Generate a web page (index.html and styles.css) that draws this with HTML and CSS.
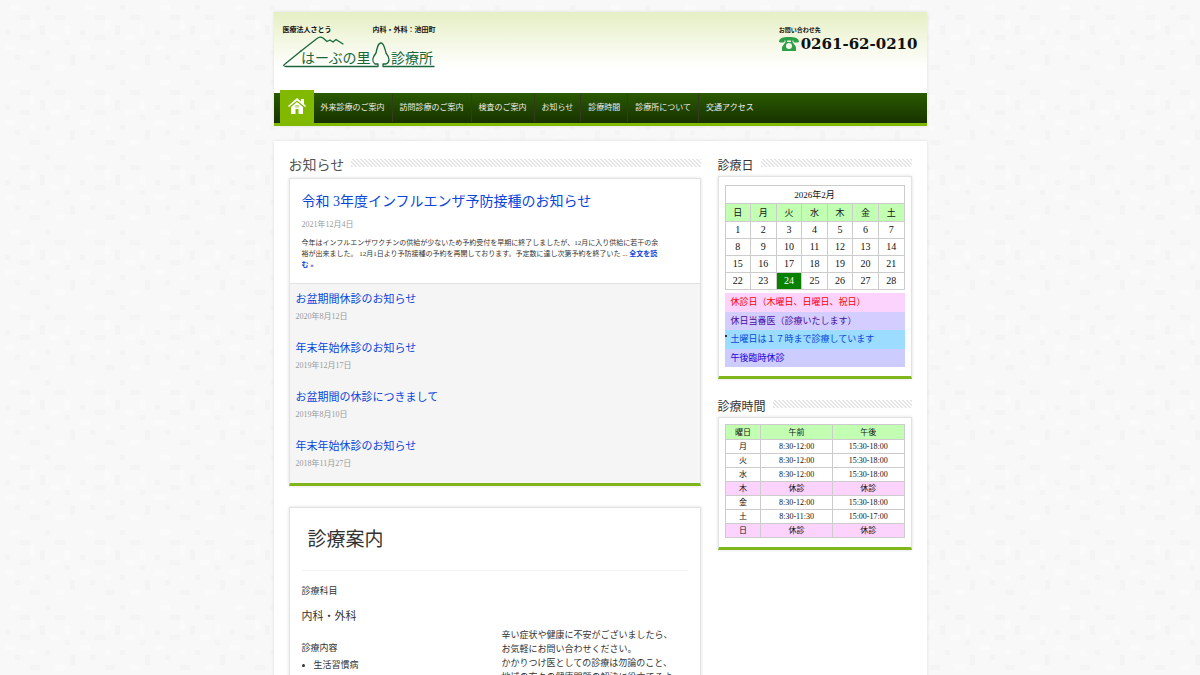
FILE: index.html
```html
<!DOCTYPE html>
<html lang="ja">

<head>
    <meta charset="UTF-8">
    <meta name="viewport" content="width=device-width, initial-scale=1.0">
    <title>はーぶの里診療所</title>
    <link rel="stylesheet" href="styles.css">
</head>

<body>
    <div class="wrapper">
        <header class="header">
            <div class="branding">
                <a href="#" class="logo">
                    <span class="tagline"><span>医療法人さとう</span><span>内科・外科：池田町</span></span>
                    <svg class="logo-mark" width="153" height="34" viewBox="0 0 153 34" role="img" aria-label="はーぶの里診療所">
                        <g fill="none" stroke="#17673a" stroke-width="1.3" stroke-linejoin="round" stroke-linecap="round">
                            <path d="M18 16 L2 29 Q-1 31 3 31.500 H95 V29 H92 C88 26 90 22 93 18 C94 13 95 8 98 8 C101 8 102 14 103 18 C107 23 107 27 103 29 H100 V31.500 H151" />
                            <path d="M18 16 L34 3.500 Q37 1 40 3 L44 6.500 L47 5 L50 7 L53 4.500 L60 9" />
                        </g>
                        <g class="logo-text" fill="#17673a">
                            <text x="18" y="28">はーぶの里</text>
                            <text x="108" y="28">診療所</text>
                        </g>
                    </svg>
                </a>
                <div class="contact">
                    <span class="contact-label">お問い合わせ先</span>
                    <div class="phone">
                        <svg width="20" height="14" viewBox="0 0 20 14" aria-hidden="true">
                            <path fill="#2e9e48" fill-rule="evenodd" d="M0 5 C0 1 4 0 10 0 C16 0 20 1 20 5 Q17 6 14.500 5 V3.500 H13.500 V5 L17 10 V14 H3 V10 L6.500 5 V3.500 H5.500 V5 Q3 6 0 5 Z M8 3.500 V5 H12 V3.500 Z M10 6 A3 3 0 1 0 10 12 A3 3 0 1 0 10 6 Z" />
                        </svg>
                        <span>0261-62-0210</span>
                    </div>
                </div>
            </div>
            <nav class="nav">
                <a href="#" class="home" aria-label="ホーム">
                    <svg width="18" height="17" viewBox="0 0 18 17" aria-hidden="true">
                        <path fill="#fff" fill-rule="evenodd" d="M9 0 L13 3.500 V1 H16 V6 L18 8 L17 9 L9 2.500 L1 9 L0 8 Z M9 4 L15 9 V16 H10.500 V11 H7.500 V16 H3 V9 Z M7.500 7 V9.500 H10.500 V7 Z" />
                        <path stroke="#fff" stroke-width=".6" d="M9 7 V9.500 M7.500 8.200 H10.500" />
                    </svg>
                </a>
                <a href="#">外来診療のご案内</a>
                <a href="#">訪問診療のご案内</a>
                <a href="#">検査のご案内</a>
                <a href="#">お知らせ</a>
                <a href="#">診療時間</a>
                <a href="#">診療所について</a>
                <a href="#">交通アクセス</a>
            </nav>
        </header>

        <div class="container">
            <main class="main">
                <section>
                    <h2 class="heading">お知らせ</h2>
                    <div class="box">
                        <article class="featured">
                            <h3><a href="#">令和 3年度インフルエンザ予防接種のお知らせ</a></h3>
                            <p class="date">2021年12月4日</p>
                            <p class="excerpt">今年はインフルエンザワクチンの供給が少ないため予約受付を早期に終了しましたが、12月に入り供給に若干の余<br>裕が出来ました。 12月1日より予防接種の予約を再開しております。予定数に達し次第予約を終了いた ... <a href="#">全文を読<br>む »</a></p>
                        </article>
                        <ul class="news">
                            <li><a href="#">お盆期間休診のお知らせ</a><p class="date">2020年8月12日</p></li>
                            <li><a href="#">年末年始休診のお知らせ</a><p class="date">2019年12月17日</p></li>
                            <li><a href="#">お盆期間の休診につきまして</a><p class="date">2019年8月10日</p></li>
                            <li><a href="#">年末年始休診のお知らせ</a><p class="date">2018年11月27日</p></li>
                        </ul>
                    </div>
                </section>

                <article class="box guide">
                    <h1>診療案内</h1>
                    <h4>診療科目</h4>
                    <p class="subject">内科・外科</p>
                    <div class="columns">
                        <div>
                            <h4 class="detail">診療内容</h4>
                            <ul class="bullets">
                                <li>生活習慣病</li>
                            </ul>
                        </div>
                        <p class="message">辛い症状や健康に不安がございましたら、<br>お気軽にお問い合わせください。<br>かかりつけ医としての診療は勿論のこと、<br>地域の方々の健康問題の解決に役立てるよ</p>
                    </div>
                </article>
            </main>

            <aside class="side">
                <section>
                    <h2 class="heading">診療日</h2>
                    <div class="box panel">
                        <table class="calendar">
                            <thead>
                                <tr><td colspan="7">2026年2月</td></tr>
                                <tr><th>日</th><th>月</th><th>火</th><th>水</th><th>木</th><th>金</th><th>土</th></tr>
                            </thead>
                            <tbody>
                                <tr><td>1</td><td>2</td><td>3</td><td>4</td><td>5</td><td>6</td><td>7</td></tr>
                                <tr><td>8</td><td>9</td><td>10</td><td>11</td><td>12</td><td>13</td><td>14</td></tr>
                                <tr><td>15</td><td>16</td><td>17</td><td>18</td><td>19</td><td>20</td><td>21</td></tr>
                                <tr><td>22</td><td>23</td><td class="today">24</td><td>25</td><td>26</td><td>27</td><td>28</td></tr>
                            </tbody>
                        </table>
                        <ul class="legend">
                            <li class="closed">休診日（木曜日、日曜日、祝日）</li>
                            <li class="duty">休日当番医（診療いたします）</li>
                            <li class="saturday">土曜日は１７時まで診療しています</li>
                            <li class="afternoon">午後臨時休診</li>
                        </ul>
                    </div>
                </section>
                <section>
                    <h2 class="heading">診療時間</h2>
                    <div class="box panel panel-hours">
                        <table class="hours">
                            <thead>
                                <tr><th class="day">曜日</th><th>午前</th><th>午後</th></tr>
                            </thead>
                            <tbody>
                                <tr><td>月</td><td>8:30-12:00</td><td>15:30-18:00</td></tr>
                                <tr><td>火</td><td>8:30-12:00</td><td>15:30-18:00</td></tr>
                                <tr><td>水</td><td>8:30-12:00</td><td>15:30-18:00</td></tr>
                                <tr class="off"><td>木</td><td>休診</td><td>休診</td></tr>
                                <tr><td>金</td><td>8:30-12:00</td><td>15:30-18:00</td></tr>
                                <tr><td>土</td><td>8:30-11:30</td><td>15:00-17:00</td></tr>
                                <tr class="off"><td>日</td><td>休診</td><td>休診</td></tr>
                            </tbody>
                        </table>
                    </div>
                </section>
            </aside>
        </div>
    </div>
</body>

</html>
```
FILE: styles.css
```css
* {
    box-sizing: border-box;
}

body {
    margin: 0;
    padding: 12px 16px;
    color: #333;
    font-family: "Liberation Serif", "Noto Sans CJK JP", serif;
    font-size: 9px;
    line-height: 14px;
    background: #f8f8f8 url("data:image/svg+xml,%3Csvg xmlns='http://www.w3.org/2000/svg' width='75' height='75'%3E%3Cpath fill='%23f4f4f4' d='M45 5h5v5h-5zM20 15h10v5H20zM55 15h10v5H55zM40 25h5v10h-5zM5 30h5v5H5zM20 35h10v5H20zM65 40h5v5h-5zM45 50h5v5h-5zM15 55h5v5h-5zM70 55h5v10h-5zM30 65h10v5H30z'/%3E%3Cpath fill='%23fafafa' d='M10 5h10v5H10zM30 20h5v10h-5zM65 25h5v10h-5zM50 35h10v5H50zM5 45h10v5H5zM30 50h5v5h-5zM55 65h10v5H55z'/%3E%3C/svg%3E");
}

h1, h2, h3, h4, p, ul {
    margin: 0;
    padding: 0;
    font-weight: normal;
}

ul {
    list-style: none;
}

a {
    color: #0a46dc;
    text-decoration: none;
}

.wrapper {
    max-width: 653px;
    margin: 0 auto;
}

/* header */
.header {
    background: #fff linear-gradient(#e6efc4, #fff 56px);
    box-shadow: 0 0 3px #ddd;
}

.branding {
    display: flex;
    justify-content: space-between;
    min-height: 81px;
    padding: 11px 9px 0;
}

.logo, .contact {
    color: #111;
    font-family: "Noto Sans CJK JP", sans-serif;
    font-size: 7px;
    font-weight: bold;
    line-height: 12px;
}

.tagline {
    display: flex;
    justify-content: space-between;
}

.logo-mark {
    display: block;
}

.logo-text {
    font-size: 14px;
    font-weight: normal;
}

.contact-label {
    font-size: 6px;
}

.phone {
    display: flex;
    align-items: center;
    gap: 2px;
    font-family: "DejaVu Serif", serif;
    font-size: 15px;
    line-height: 16px;
}

.nav {
    display: flex;
    align-items: center;
    height: 33px;
    padding-left: 6px;
    border-bottom: 3px solid #80b900;
    background: linear-gradient(#2a5a00, #173200);
}

.nav a {
    padding: 0 7px;
    border-right: 1px solid #333a20;
    color: #eee;
    font-size: 8px;
    line-height: 28px;
}

.nav a:last-child {
    border-right: none;
}

.nav .home {
    display: flex;
    align-items: center;
    align-self: flex-end;
    justify-content: center;
    width: 34px;
    height: 33px;
    padding: 0;
    border: none;
    background: #80b900;
}

/* content */
.container {
    display: grid;
    grid-template-columns: minmax(0, 1fr) 194px;
    gap: 17px;
    margin-top: 15px;
    padding: 15px;
    background: #fff;
    box-shadow: 0 0 3px #ddd;
}

.heading {
    display: flex;
    align-items: center;
    gap: 7px;
    font-size: 14px;
    line-height: 20px;
    color: #555;
}

.heading::after {
    content: "";
    flex: 1;
    height: 8px;
    margin-bottom: 6px;
    background: linear-gradient(45deg, #e4e4e4 25%, #fff 25%, #fff 50%, #e4e4e4 50%, #e4e4e4 75%, #fff 75%) 0 0 / 4px 4px;
}

.box {
    border: 1px solid #e2e2e2;
    border-bottom: 3px solid #80b51c;
    background: #fff;
    box-shadow: 0 0 3px #ddd;
}

.main .heading {
    margin-bottom: 2px;
}

.featured {
    padding: 12px;
    border-bottom: 1px solid #e2e2e2;
}

.featured h3 {
    font-size: 14px;
    line-height: 22px;
}

.date {
    color: #999;
    font-size: 8px;
    line-height: 18px;
}

.featured .date {
    margin: 3px 0 4px;
}

.excerpt {
    font-size: 7px;
    line-height: 11px;
}

.excerpt a {
    font-weight: bold;
}

.news {
    display: flex;
    flex-direction: column;
    gap: 13px;
    padding: 6px 6px 10px;
    background: #f5f5f5;
    font-size: 11px;
    line-height: 18px;
}

.guide {
    margin-top: 21px;
    padding: 12px;
}

.guide h1 {
    margin-bottom: 13px;
    padding: 6px 6px 16px;
    border-bottom: 1px solid #f2f2f2;
    font-size: 19px;
    line-height: 28px;
}

.guide h4 {
    font-size: 9px;
    line-height: 14px;
}

.subject {
    margin: 9px 0 3px;
    font-size: 11px;
    line-height: 18px;
}

.columns {
    display: grid;
    grid-template-columns: 200px 1fr;
}

.detail {
    padding-top: 13px;
}

.bullets {
    margin-top: 3px;
    padding-left: 12px;
    list-style: disc;
}

/* sidebar */
.side {
    display: flex;
    flex-direction: column;
    gap: 18px;
}

.side .heading {
    color: #333;
    font-size: 12px;
}

.panel {
    padding: 8px 6px 9px;
}

.panel-hours {
    padding-top: 6px;
}

table {
    width: 100%;
    border-collapse: collapse;
    table-layout: fixed;
    color: #111;
    text-align: center;
}

th, td {
    padding: 0;
    border: 1px solid #ccc;
    font-weight: normal;
}

th {
    background: #c3ffb3;
}

.calendar {
    font-size: 10px;
    line-height: 16px;
}

.calendar th, .calendar thead td {
    font-size: 9px;
}

.today {
    background: #088000;
    color: #fff;
}

.legend {
    display: grid;
    height: 74px;
    margin-top: 3px;
    line-height: 18px;
}

.legend li {
    padding-left: 6px;
}

.closed {
    background: #fbd3fd;
    color: #f00;
}

.duty {
    background: #d3ceff;
    color: #4b0aa0;
}

.saturday {
    position: relative;
    background: #9bdcff;
    color: #0a46dc;
}

/* marker hangs on the left edge of the row */
.saturday::before {
    content: "";
    position: absolute;
    top: 5px;
    left: 0;
    width: 2px;
    height: 2px;
    background: #333;
}

.afternoon {
    background: #ccf;
    color: #1a00d8;
}

.calendar tr {
    height: 17px;
}

.calendar thead tr {
    height: 18px;
}

.hours {
    font-size: 8px;
    line-height: 13px;
}

.hours thead tr {
    height: 15px;
}

.day {
    width: 20%;
}

.off td {
    background: #fbd3fd;
}
```
